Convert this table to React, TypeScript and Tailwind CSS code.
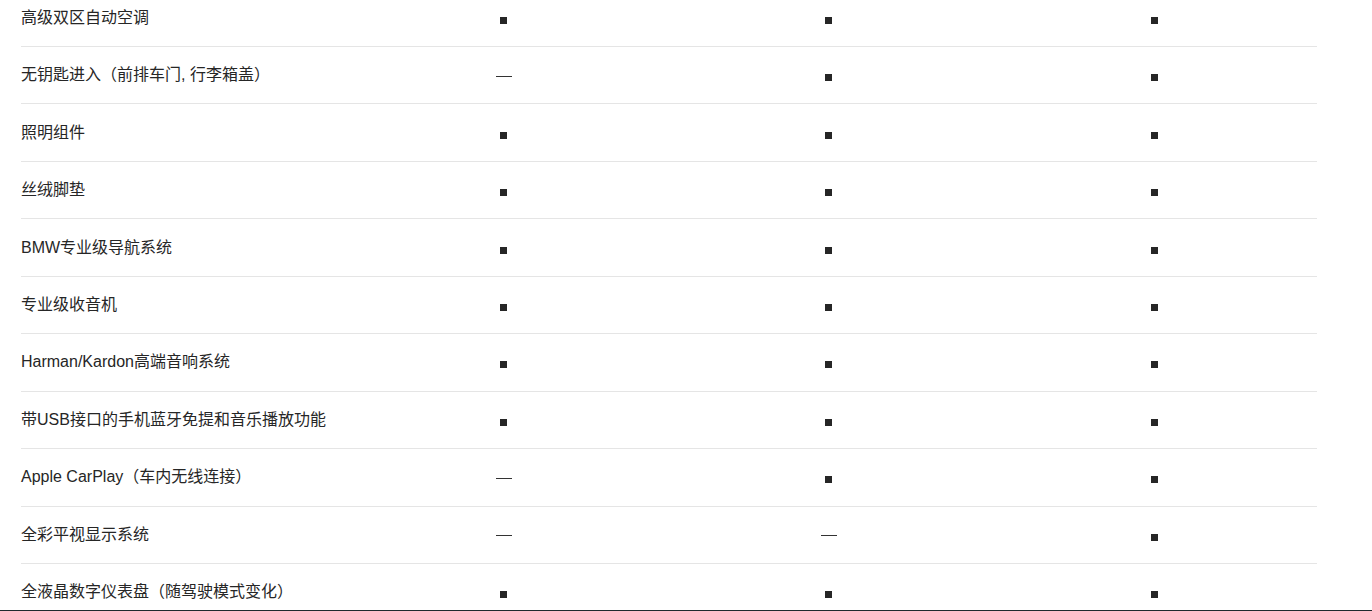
const FEATURES: { name: string; values: boolean[] }[] = [
  { name: '高级双区自动空调', values: [true, true, true] },
  { name: '无钥匙进入（前排车门, 行李箱盖）', values: [false, true, true] },
  { name: '照明组件', values: [true, true, true] },
  { name: '丝绒脚垫', values: [true, true, true] },
  { name: 'BMW专业级导航系统', values: [true, true, true] },
  { name: '专业级收音机', values: [true, true, true] },
  { name: 'Harman/Kardon高端音响系统', values: [true, true, true] },
  { name: '带USB接口的手机蓝牙免提和音乐播放功能', values: [true, true, true] },
  { name: 'Apple CarPlay（车内无线连接）', values: [false, true, true] },
  { name: '全彩平视显示系统', values: [false, false, true] },
  { name: '全液晶数字仪表盘（随驾驶模式变化）', values: [true, true, true] },
]

function Mark({ on }: { on: boolean }) {
  if (on) {
    return <span className="block w-[7px] h-[7px] bg-[#262626] mt-[5px]" />
  }
  return <span className="block w-4 h-px bg-[#333] mt-[2px] ml-[1px]" />
}

export default function App() {
  return (
    <div
      className="relative min-h-screen bg-white overflow-hidden text-[#262626]"
      style={{ fontFamily: '"Liberation Sans", Arial, "Noto Sans CJK SC", sans-serif' }}
    >
      <div className="ml-[21px] w-[1296px] -mt-[10.44px]">
        {FEATURES.map((row) => (
          <div
            key={row.name}
            className="grid grid-cols-[319.5px_1fr_1fr_1fr] h-[57.44px] border-b border-[#e5e5e5] items-center"
          >
            <div className="text-base leading-5">{row.name}</div>
            {row.values.map((v, i) => (
              <div key={i} className="flex justify-center items-center">
                <Mark on={v} />
              </div>
            ))}
          </div>
        ))}
      </div>

      {/* bottom bar peeking in */}
      <div className="fixed left-0 right-0 top-[610px] h-5 bg-[#1f2a2d]" />
    </div>
  )
}
